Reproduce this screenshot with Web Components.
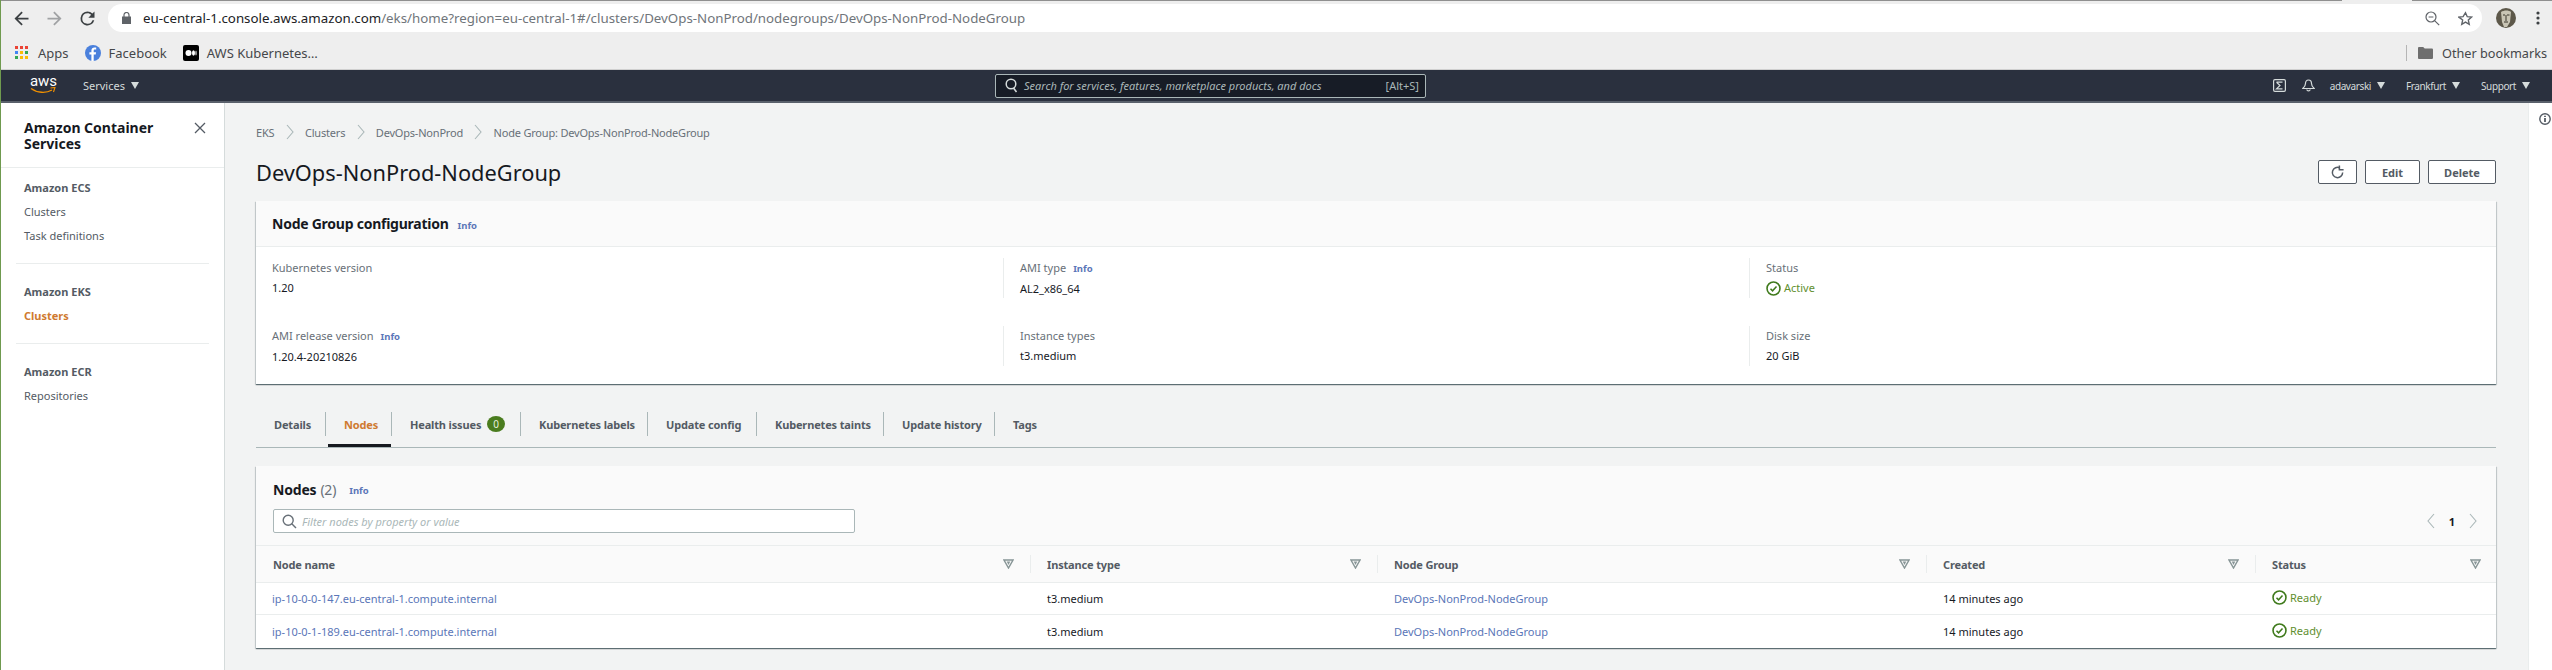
<!DOCTYPE html>
<html>
<head>
<meta charset="utf-8">
<title>DevOps-NonProd-NodeGroup</title>
<style>
  html, body { margin: 0; padding: 0; height: 100%; overflow: hidden; }
  body { font-family: "Noto Sans", "Open Sans", sans-serif; font-size: 11px; color: #16191f; background: #f2f3f3; }
  a { color: inherit; text-decoration: none; }
</style>
</head>
<body>
<console-app>
  <browser-toolbar slot="chrome">
    <span slot="host">eu-central-1.console.aws.amazon.com</span><span slot="path">/eks/home?region=eu-central-1#/clusters/DevOps-NonProd/nodegroups/DevOps-NonProd-NodeGroup</span>
  </browser-toolbar>
  <bookmark-bar slot="chrome"></bookmark-bar>
  <aws-nav slot="chrome"></aws-nav>
  <side-nav slot="side"></side-nav>

  <bread-crumbs>
    <a href="#">EKS</a>
    <a href="#">Clusters</a>
    <a href="#">DevOps-NonProd</a>
    <span>Node Group: DevOps-NonProd-NodeGroup</span>
  </bread-crumbs>
  <page-header>DevOps-NonProd-NodeGroup</page-header>

  <config-card heading="Node Group configuration">
    <kv-item label="Kubernetes version" first>1.20</kv-item>
    <kv-item label="AMI type" info>AL2_x86_64</kv-item>
    <kv-item label="Status"><status-ok>Active</status-ok></kv-item>
    <kv-item label="AMI release version" info first>1.20.4-20210826</kv-item>
    <kv-item label="Instance types">t3.medium</kv-item>
    <kv-item label="Disk size">20 GiB</kv-item>
  </config-card>

  <tab-bar></tab-bar>

  <nodes-table>
    <node-row name="ip-10-0-0-147.eu-central-1.compute.internal"></node-row>
    <node-row name="ip-10-0-1-189.eu-central-1.compute.internal"></node-row>
  </nodes-table>

  <help-rail slot="rail"></help-rail>
</console-app>

<script>
// shared bits of svg
const chevron = (w, h, color) => `<svg width="${w}" height="${h}" viewBox="0 0 8 16"><path d="M1 1l6 7-6 7" fill="none" stroke="${color}" stroke-width="1.1"/></svg>`;
const okIcon = `<svg width="15" height="15" viewBox="0 0 16 16"><circle cx="8" cy="8" r="6.9" fill="none" stroke="#3f7a1c" stroke-width="1.7"/><path d="M4.8 8.2l2.2 2.3 4.2-4.6" fill="none" stroke="#3f7a1c" stroke-width="1.6"/></svg>`;
const caret = `<svg width="8" height="7" viewBox="0 0 8 7"><path d="M0 0h8L4 7z" fill="#d5dbdb"/></svg>`;
const sortIcon = `<svg width="11" height="10" viewBox="0 0 11 10"><path d="M1 1h9L5.5 9z" fill="none" stroke="#879596" stroke-width="1.4"/><path d="M3.7 2.6h3.6L5.5 6z" fill="#879596"/></svg>`;

class ConsoleApp extends HTMLElement {
  constructor() {
    super();
    this.attachShadow({mode: 'open'}).innerHTML = `
    <style>
      :host { display: flex; flex-direction: column; height: 670px; border-left: 1px solid #6f9a4f; box-sizing: border-box; }
      .strip { height: 1px; flex: none; display: flex; background: #8f8f8f; }
      .strip i { margin-left: 2341px; width: 70px; background: #eee; }
      .body { flex: 1; display: flex; min-height: 0; }
      main { flex: 1; min-width: 0; padding: 19px 32px 0 31px; }
    </style>
    <div class="strip"><i></i></div>
    <slot name="chrome"></slot>
    <div class="body">
      <slot name="side"></slot>
      <main><slot></slot></main>
      <slot name="rail"></slot>
    </div>`;
  }
}

class BrowserToolbar extends HTMLElement {
  constructor() {
    super();
    this.attachShadow({mode: 'open'}).innerHTML = `
    <style>
      :host { display: flex; align-items: center; height: 36px; flex: none; background: #eeeeee; padding: 0 0 2px 4px; box-sizing: border-box; font-family: "Noto Sans", sans-serif; }
      .btn { width: 33px; display: flex; justify-content: center; }
      .url { flex: 1; margin-left: 4px; height: 28px; border-radius: 14px; background: #fff; display: flex; align-items: center; padding: 0 8px 0 14px; }
      .lock { margin-right: 12px; display: flex; }
      .text { flex: 1; font-size: 13.3px; color: #70757a; white-space: nowrap; }
      ::slotted([slot=host]) { color: #202124; }
      .tail { display: flex; align-items: center; }
      .tail svg { display: block; }
      .star { margin-left: 18px; margin-right: 1px; }
      .me { margin-left: 14px; margin-right: 20px; }
      .dots { margin-right: 12px; }
    </style>
    <div class="btn"><svg width="21" height="21" viewBox="0 0 24 24"><path fill="#3c4043" d="M20 11H7.83l5.59-5.59L12 4l-8 8 8 8 1.41-1.41L7.83 13H20v-2z"/></svg></div>
    <div class="btn"><svg width="21" height="21" viewBox="0 0 24 24"><path fill="#a0a2a4" d="M4 11h12.17l-5.59-5.59L12 4l8 8-8 8-1.41-1.41L16.17 13H4v-2z"/></svg></div>
    <div class="btn"><svg width="21" height="21" viewBox="0 0 24 24"><path fill="#3c4043" d="M17.65 6.35A7.96 7.96 0 0 0 12 4a8 8 0 1 0 7.75 10h-2.08A6 6 0 1 1 12 6c1.66 0 3.14.69 4.22 1.78L13 11h7V4l-2.35 2.35z"/></svg></div>
    <div class="url">
      <span class="lock"><svg width="9" height="12" viewBox="0 0 9 12"><path fill="#5f6368" d="M0 4.5h9V12H0z"/><path d="M2 5V3a2.5 2.5 0 0 1 5 0v2" fill="none" stroke="#5f6368" stroke-width="1.2"/></svg></span>
      <span class="text"><slot name="host"></slot><slot name="path"></slot></span>
      <span class="tail">
        <svg width="15" height="15" viewBox="0 0 15 15"><circle cx="6" cy="6" r="5" fill="none" stroke="#5f6368" stroke-width="1.2"/><path d="M3.6 6h4.8M9.6 9.6l4.6 4.6" stroke="#5f6368" stroke-width="1.2"/></svg>
        <svg class="star" width="15" height="15" viewBox="0 0 24 24"><path fill="none" stroke="#5f6368" stroke-width="2.2" d="M12 2.8l2.8 6.3 6.9.7-5.2 4.6 1.5 6.8-6-3.5-6 3.5 1.5-6.8L1.300 9.800l6.900-.7z"/></svg>
      </span>
    </div>
    <svg class="me" width="20" height="20" viewBox="0 0 20 20"><circle cx="10" cy="10" r="10" fill="#5d584a"/><path d="M5 4c3-2 8-2 10 0l-1 10-3 5H8l-2-5z" fill="#c9c5b5"/><path d="M7 7h2M11 7h2.500M10 7v6M8 14h4" stroke="#3a362c" stroke-width="1" fill="none"/></svg>
    <svg class="dots" width="4" height="14" viewBox="0 0 4 14"><circle cx="2" cy="2" r="1.600" fill="#3c4043"/><circle cx="2" cy="7" r="1.600" fill="#3c4043"/><circle cx="2" cy="12" r="1.600" fill="#3c4043"/></svg>`;
  }
}

class BookmarkBar extends HTMLElement {
  constructor() {
    super();
    const dots = ['#ea4335','#ea4335','#ea4335','#4285f4','#fbbc04','#34a853','#34a853','#fbbc04','#fbbc04']
      .map((c, i) => `<rect x="${i % 3 * 5}" y="${(i / 3 | 0) * 5}" width="3" height="3" fill="${c}"/>`).join('');
    this.attachShadow({mode: 'open'}).innerHTML = `
    <style>
      :host { display: flex; align-items: center; height: 33px; flex: none; background: #eeeeee; border-bottom: 1px solid #cfcfcf; padding-left: 14px; padding-bottom: 1px; box-sizing: border-box; font-size: 13px; color: #45474a; font-family: "Noto Sans", sans-serif; }
      .mark { display: flex; align-items: center; white-space: nowrap; }
      .mark svg { margin-right: 8px; display: block; }
      .mark + .mark { margin-left: 16px; }
      .other { margin-left: auto; display: flex; align-items: center; }
      .sep { width: 1px; height: 16px; background: #b5b5b5; margin-right: 11px; }
      .other svg { margin-right: 9px; }
      .other span { margin-right: 5px; font-size: 12.7px; }
    </style>
    <div class="mark"><svg width="13" height="13" viewBox="0 0 13 13">${dots}</svg><span style="margin-left:2px">Apps</span></div>
    <div class="mark"><svg width="16" height="16" viewBox="0 0 16 16"><circle cx="8" cy="8" r="8" fill="#4a80dc"/><path d="M8.700 16V9.500h2l.4-2.300H8.700V5.800c0-.7.3-1.200 1.200-1.200h1.300v-2C10.800 2.500 10.100 2.500 9.500 2.500 7.700 2.500 6.400 3.600 6.400 5.600v1.600H4.400v2.300h2V16z" fill="#fff"/></svg>Facebook</div>
    <div class="mark"><svg width="16" height="16" viewBox="0 0 16 16"><rect width="16" height="16" rx="2" fill="#000"/><circle cx="5.500" cy="8" r="3" fill="#fff"/><ellipse cx="10.500" cy="8" rx="1.500" ry="2.800" fill="#fff"/><ellipse cx="13" cy="8" rx=".6" ry="2.500" fill="#fff"/></svg>AWS Kubernetes…</div>
    <div class="other"><div class="sep"></div><svg width="15" height="12" viewBox="0 0 15 12"><path d="M0 1.200C0 .5.500 0 1.200 0h4l1.500 1.500h7c.7 0 1.300.5 1.300 1.200v8c0 .7-.6 1.300-1.300 1.300H1.200C.5 12 0 11.400 0 10.700z" fill="#6e6e6e"/></svg><span>Other bookmarks</span></div>`;
  }
}

class AwsNav extends HTMLElement {
  constructor() {
    super();
    this.attachShadow({mode: 'open'}).innerHTML = `
    <style>
      :host { display: flex; align-items: center; flex: none; background: #2a303e; border-bottom: 2px solid #59606b; height: 31px; padding: 0 22px 0 29px; color: #d5dbdb; font-size: 10px; }
      .logo { width: 27px; display: flex; flex-direction: column; align-items: center; color: #fff; font: 15px/11px "Roboto", sans-serif; }
      .logo svg { display: block; margin-top: 0; }
      .drop { display: flex; align-items: center; gap: 6px; white-space: nowrap; }
      .right .drop span { letter-spacing: -.4px; }
      .services { margin-left: 26px; font-size: 11px; }
      .search { margin-left: 856px; width: 431px; height: 24px; box-sizing: border-box; border: 1px solid #aab7b8; border-radius: 2px; background: #171c26; display: flex; align-items: center; padding: 0 6px 0 9px; font-size: 11px; color: #aab7b8; }
      .search svg { margin-right: 6px; }
      .search em { flex: 1; }
      .right { margin-left: auto; display: flex; align-items: center; }
      .right svg.i { display: block; }
      .bell { margin-left: 16px; margin-right: 15px; }
      .right .drop + .drop { margin-left: 21px; }
    </style>
    <div class="logo"><span>aws</span><svg width="27" height="8" viewBox="0 0 27 8"><path d="M1 1.500c6 4.500 15 5 21 1.500" fill="none" stroke="#f29100" stroke-width="1.300"/><path d="M20.500 1l4.500-.5-1.500 4.500" fill="none" stroke="#f29100" stroke-width="1.100"/></svg></div>
    <div class="drop services">Services ${caret}</div>
    <div class="search"><svg width="13" height="15" viewBox="0 0 13 15"><circle cx="6" cy="6" r="4.800" fill="none" stroke="#d5dbdb" stroke-width="1.500"/><path d="M8.500 10l3 4" stroke="#d5dbdb" stroke-width="1.500"/></svg><em>Search for services, features, marketplace products, and docs</em><span>[Alt+S]</span></div>
    <div class="right">
      <svg class="i" width="13" height="13" viewBox="0 0 13 13"><rect x=".6" y=".6" width="11.800" height="11.800" rx="1.300" fill="none" stroke="#d5dbdb" stroke-width="1.200"/><path d="M3.500 3.200h6M3.500 3.200L7 6.500 3.500 9.800h6" fill="none" stroke="#d5dbdb" stroke-width="1.200"/></svg>
      <svg class="i bell" width="13" height="13" viewBox="0 0 13 13"><path d="M6.500 1C4.500 1 3.500 2.500 3.500 4.500c0 2-1 3.500-2.700 5h11.400c-1.700-1.500-2.700-3-2.700-5C9.500 2.500 8.500 1 6.500 1zM4.800 10.500c.3 1.800 3.100 1.800 3.400 0" fill="none" stroke="#d5dbdb" stroke-width="1.200"/></svg>
      <div class="drop"><span>adavarski</span>${caret}</div>
      <div class="drop"><span>Frankfurt</span>${caret}</div>
      <div class="drop"><span>Support</span>${caret}</div>
    </div>`;
  }
}

class SideNav extends HTMLElement {
  constructor() {
    super();
    this.attachShadow({mode: 'open'}).innerHTML = `
    <style>
      :host { display: block; width: 223px; flex: none; background: #fff; border-right: 1px solid #d5dbdb; font-size: 11px; color: #545b64; }
      header { position: relative; padding: 17px 50px 15px 23px; font-size: 14px; line-height: 16px; font-weight: 700; color: #16191f; border-bottom: 1px solid #eaeded; }
      .close { position: absolute; right: 18px; top: 19px; }
      section { padding: 0 23px; }
      section.s1 { padding-top: 8px; }
      section.s2 { padding-top: 16px; }
      hr { margin: 15px 15px 0; border: 0; border-top: 1px solid #eaeded; }
      div { line-height: 24px; white-space: nowrap; }
      .h { font-weight: 700; }
      .cur { color: #cf7a30; font-weight: 700; }
    </style>
    <header>Amazon Container Services
      <svg class="close" width="12" height="12" viewBox="0 0 12 12"><path d="M1 1l10 10M11 1L1 11" stroke="#545b64" stroke-width="1.300"/></svg>
    </header>
    <section class="s1"><div class="h">Amazon ECS</div><div>Clusters</div><div>Task definitions</div></section>
    <hr>
    <section class="s2"><div class="h">Amazon EKS</div><div class="cur">Clusters</div></section>
    <hr>
    <section class="s2"><div class="h">Amazon ECR</div><div>Repositories</div></section>`;
  }
}

class BreadCrumbs extends HTMLElement {
  constructor() {
    super();
    this.attachShadow({mode: 'open'}).innerHTML = `
    <style>
      :host { display: flex; align-items: center; height: 20px; font-size: 11px; letter-spacing: -.2px; color: #687078; }
      ::slotted(a) { color: #5a76b8; }
      .c { display: flex; align-items: center; }
      .c svg { margin: 0 11.3px; }
    </style>
    <div class="c" id="c"></div>`;
    const c = this.shadowRoot.getElementById('c');
    [...this.children].forEach((el, i, all) => {
      el.slot = 'c' + i;
      const s = document.createElement('slot');
      s.name = 'c' + i;
      c.appendChild(s);
      if (i < all.length - 1) c.insertAdjacentHTML('beforeend', chevron(8, 16, '#aab7b8'));
    });
  }
}

class PageHeader extends HTMLElement {
  constructor() {
    super();
    this.attachShadow({mode: 'open'}).innerHTML = `
    <style>
      :host { display: flex; align-items: center; justify-content: space-between; height: 24px; margin-top: 18px; }
      h1 { margin: 0; font-size: 21.8px; font-weight: 400; color: #16191f; white-space: nowrap; }
      .btns { display: flex; gap: 8px; }
      button { font: 700 11px "Noto Sans", sans-serif; color: #545b64; height: 24px; background: #fff; border: 1px solid #545b64; border-radius: 2px; padding: 0; display: flex; align-items: center; justify-content: center; }
    </style>
    <h1><slot></slot></h1>
    <div class="btns">
      <button style="width:39px"><svg width="15" height="15" viewBox="0 0 16 16"><path d="M13.500 8A5.500 5.500 0 1 1 10.500 3.100" fill="none" stroke="#545b64" stroke-width="1.600"/><path d="M10 .5v4.500h4.500" fill="none" stroke="#545b64" stroke-width="1.600"/></svg></button>
      <button style="width:55px">Edit</button>
      <button style="width:68px">Delete</button>
    </div>`;
  }
}

class InfoLink extends HTMLElement {
  constructor() {
    super();
    this.attachShadow({mode: 'open'}).innerHTML = `
    <style>:host { display: inline-block; font-size: 9.5px; font-weight: 700; color: #5a76b8; }</style>Info`;
  }
}

class ConfigCard extends HTMLElement {
  constructor() {
    super();
    this.attachShadow({mode: 'open'}).innerHTML = `
    <style>
      :host { display: block; margin-top: 17px; background: #fff; box-shadow: 0 1px 1px 0 rgba(0,28,36,.5), 1px 1px 1px 0 rgba(0,28,36,.12), -1px 1px 1px 0 rgba(0,28,36,.12); }
      header { height: 46px; box-sizing: border-box; background: #fafafa; border-bottom: 1px solid #eaeded; display: flex; align-items: center; padding: 0 16px; font-size: 14px; letter-spacing: -.25px; font-weight: 700; white-space: nowrap; }
      header info-link { margin-left: 9px; margin-top: 3px; letter-spacing: 0; }
      .grid { display: grid; grid-template-columns: 731px 746px 1fr; grid-auto-rows: 40px; row-gap: 28px; padding: 11px 0 18px 16px; }
    </style>
    <header>${this.getAttribute('heading')}<info-link></info-link></header>
    <div class="grid"><slot></slot></div>`;
  }
}

class KvItem extends HTMLElement {
  constructor() {
    super();
    const info = this.hasAttribute('info') ? '<info-link></info-link>' : '';
    this.attachShadow({mode: 'open'}).innerHTML = `
    <style>
      :host { display: block; padding-left: 16px; border-left: 1px solid #eaeded; line-height: 20px; font-size: 11px; white-space: nowrap; }
      :host([first]) { padding-left: 0; border-left: 0; }
      .l { color: #687078; }
      info-link { margin-left: 7px; }
    </style>
    <div class="l">${this.getAttribute('label')}${info}</div>
    <div><slot></slot></div>`;
  }
}

class StatusOk extends HTMLElement {
  constructor() {
    super();
    this.attachShadow({mode: 'open'}).innerHTML = `
    <style>
      :host { display: inline-flex; align-items: center; gap: 3px; color: #5f8f2f; }
      svg { display: block; }
    </style>${okIcon}<slot></slot>`;
  }
}

class TabBar extends HTMLElement {
  constructor() {
    super();
    const tabs = [['Details', 70], ['Nodes', 66], ['Health issues', 129], ['Kubernetes labels', 127], ['Update config', 109], ['Kubernetes taints', 127], ['Update history', 111], ['Tags', 60]];
    const html = tabs.map(([t, w], i) => `<div class="tab${i == 1 ? ' on' : ''}" style="width:${w}px"><span>${t}</span>${i == 2 ? '<b>0</b>' : ''}</div>`).join('');
    this.attachShadow({mode: 'open'}).innerHTML = `
    <style>
      :host { display: flex; height: 36px; margin-top: 28px; border-bottom: 1px solid #aab7b8; box-sizing: border-box; font-size: 11px; letter-spacing: -.15px; font-weight: 700; color: #545b64; }
      .tab { position: relative; height: 24px; box-sizing: border-box; padding-left: 18px; border-right: 1px solid #aab7b8; display: flex; align-items: center; white-space: nowrap; }
      .tab:last-child { border-right: 0; }
      .on { color: #cf7a30; }
      .on::after { content: ''; position: absolute; left: 2px; right: 0; bottom: -11px; height: 3px; background: #16191f; }
      b { margin-left: auto; margin-right: 15px; width: 18px; height: 16px; border-radius: 50%; background: #4a7c1e; color: #e6efdc; font-size: 10px; font-weight: 400; display: flex; align-items: center; justify-content: center; }
    </style>${html}`;
  }
}

class NodesTable extends HTMLElement {
  constructor() {
    super();
    const cols = ['Node name', 'Instance type', 'Node Group', 'Created', 'Status'];
    this.attachShadow({mode: 'open'}).innerHTML = `
    <style>
      :host { display: block; margin-top: 18px; background: #fff; font-size: 11px; box-shadow: 0 1px 1px 0 rgba(0,28,36,.5), 1px 1px 1px 0 rgba(0,28,36,.12), -1px 1px 1px 0 rgba(0,28,36,.12); --cols: 775px 347px 549px 329px 1fr; }
      .top { height: 79px; box-sizing: border-box; background: #fafafa; padding: 12px 17px 0; }
      h2 { margin: 0; height: 22px; font-size: 14px; letter-spacing: -.2px; font-weight: 700; display: flex; align-items: center; white-space: nowrap; }
      h2 span { font-weight: 400; color: #687078; margin-left: 4px; }
      h2 info-link { margin-left: 13px; margin-top: 3px; letter-spacing: 0; }
      .tools { margin-top: 9px; display: flex; align-items: center; justify-content: space-between; }
      .filter { width: 582px; height: 24px; box-sizing: border-box; background: #fff; border: 1px solid #aab7b8; border-radius: 2px; display: flex; align-items: center; padding-left: 8px; color: #aab7b8; font-style: italic; }
      .filter svg { margin-right: 5px; }
      .pages { display: flex; align-items: center; gap: 14px; font-weight: 700; color: #16191f; margin-right: 2px; }
      .head { display: grid; grid-template-columns: var(--cols); height: 38px; box-sizing: border-box; background: #fafafa; border-top: 1px solid #eaeded; border-bottom: 1px solid #eaeded; font-weight: 700; letter-spacing: -.15px; color: #545b64; align-items: center; }
      .head div { display: flex; align-items: center; justify-content: space-between; height: 18px; padding: 0 16px; border-right: 1px solid #eaeded; }
      .head div:first-child { padding-left: 17px; }
      .head div:last-child { border-right: 0; padding-right: 15px; }
    </style>
    <div class="top">
      <h2>Nodes<span>(2)</span><info-link></info-link></h2>
      <div class="tools">
        <div class="filter"><svg width="15" height="15" viewBox="0 0 15 15"><circle cx="6.200" cy="6.200" r="5" fill="none" stroke="#687078" stroke-width="1.400"/><path d="M9.800 9.800l4.200 4.200" stroke="#687078" stroke-width="1.400"/></svg>Filter nodes by property or value</div>
        <div class="pages">${chevron(8, 16, '#aab7b8').replace('M1 1l6 7-6 7', 'M7 1L1 8l6 7')}<span>1</span>${chevron(8, 16, '#aab7b8')}</div>
      </div>
    </div>
    <div class="head">${cols.map(c => `<div><span>${c}</span>${sortIcon}</div>`).join('')}</div>
    <slot></slot>`;
  }
}

class NodeRow extends HTMLElement {
  constructor() {
    super();
    this.attachShadow({mode: 'open'}).innerHTML = `
    <style>
      :host { display: grid; grid-template-columns: 775px 347px 549px 329px 1fr; height: 32px; box-sizing: border-box; align-items: center; border-bottom: 1px solid #eaeded; white-space: nowrap; }
      :host(:last-child) { border-bottom: 0; height: 33px; }
      div { padding-left: 16px; }
      div:first-child { padding-left: 17px; letter-spacing: .07px; }
      a { color: #5a76b8; }
    </style>
    <div><a>${this.getAttribute('name')}</a></div>
    <div>t3.medium</div>
    <div><a>DevOps-NonProd-NodeGroup</a></div>
    <div>14 minutes ago</div>
    <div><status-ok>Ready</status-ok></div>`;
  }
}

class HelpRail extends HTMLElement {
  constructor() {
    super();
    this.attachShadow({mode: 'open'}).innerHTML = `
    <style>
      :host { display: block; width: 24px; flex: none; background: #fff; border-left: 1px solid #eaeded; padding: 10px 0 0 10px; box-sizing: border-box; }
      svg { display: block; }
    </style>
    <svg width="12" height="12" viewBox="0 0 12 12"><circle cx="6" cy="6" r="5.200" fill="none" stroke="#545b64" stroke-width="1.400"/><path d="M6 5v4M6 2.700v1.300" stroke="#545b64" stroke-width="1.800"/></svg>`;
  }
}

customElements.define('console-app', ConsoleApp);
customElements.define('browser-toolbar', BrowserToolbar);
customElements.define('bookmark-bar', BookmarkBar);
customElements.define('aws-nav', AwsNav);
customElements.define('side-nav', SideNav);
customElements.define('bread-crumbs', BreadCrumbs);
customElements.define('page-header', PageHeader);
customElements.define('info-link', InfoLink);
customElements.define('config-card', ConfigCard);
customElements.define('kv-item', KvItem);
customElements.define('status-ok', StatusOk);
customElements.define('tab-bar', TabBar);
customElements.define('nodes-table', NodesTable);
customElements.define('node-row', NodeRow);
customElements.define('help-rail', HelpRail);
</script>
</body>
</html>
